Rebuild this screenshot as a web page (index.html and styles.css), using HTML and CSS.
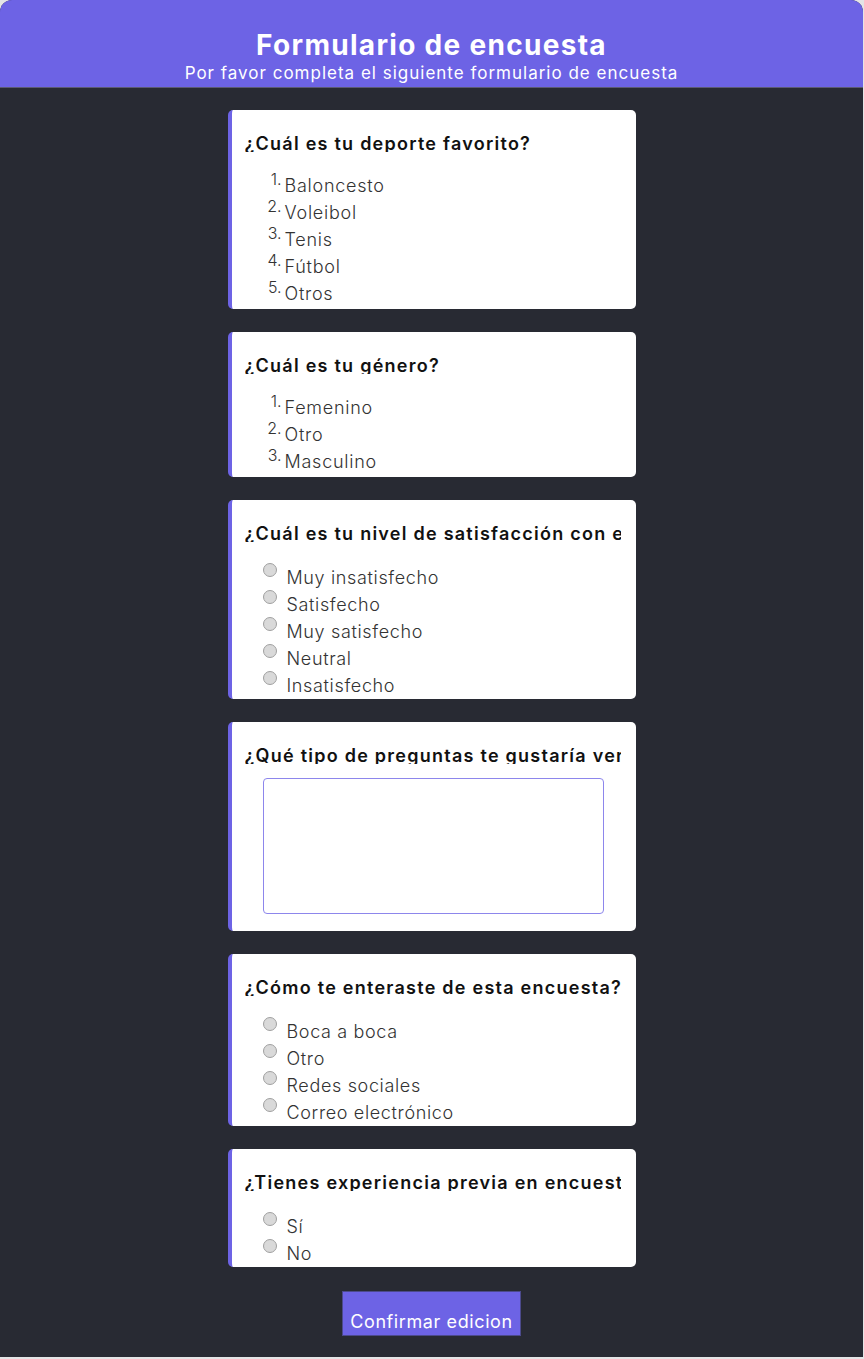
FILE: index.html
```html
<!DOCTYPE html>
<html lang="es">
<head>
<meta charset="utf-8">
<title>Formulario de encuesta</title>
<link rel="stylesheet" href="styles.css">
</head>
<body>
<div class="page">
  <header class="header">
    <h1 class="header-title">Formulario de encuesta</h1>
    <p class="header-sub">Por favor completa el siguiente formulario de encuesta</p>
  </header>
  <main class="main">
    <section class="card">
      <h2 class="q-title">¿Cuál es tu deporte favorito?</h2>
      <ol class="num-list">
        <li><span>Baloncesto</span></li>
        <li><span>Voleibol</span></li>
        <li><span>Tenis</span></li>
        <li><span>Fútbol</span></li>
        <li><span>Otros</span></li>
      </ol>
    </section>
    <section class="card">
      <h2 class="q-title">¿Cuál es tu género?</h2>
      <ol class="num-list">
        <li><span>Femenino</span></li>
        <li><span>Otro</span></li>
        <li><span>Masculino</span></li>
      </ol>
    </section>
    <section class="card">
      <h2 class="q-title">¿Cuál es tu nivel de satisfacción con el servicio?</h2>
      <ul class="radio-list">
        <li><span class="radio"></span><span>Muy insatisfecho</span></li>
        <li><span class="radio"></span><span>Satisfecho</span></li>
        <li><span class="radio"></span><span>Muy satisfecho</span></li>
        <li><span class="radio"></span><span>Neutral</span></li>
        <li><span class="radio"></span><span>Insatisfecho</span></li>
      </ul>
    </section>
    <section class="card">
      <h2 class="q-title">¿Qué tipo de preguntas te gustaría ver en futuras encuestas?</h2>
      <textarea class="answer"></textarea>
    </section>
    <section class="card">
      <h2 class="q-title">¿Cómo te enteraste de esta encuesta?</h2>
      <ul class="radio-list">
        <li><span class="radio"></span><span>Boca a boca</span></li>
        <li><span class="radio"></span><span>Otro</span></li>
        <li><span class="radio"></span><span>Redes sociales</span></li>
        <li><span class="radio"></span><span>Correo electrónico</span></li>
      </ul>
    </section>
    <section class="card">
      <h2 class="q-title">¿Tienes experiencia previa en encuestas?</h2>
      <ul class="radio-list">
        <li><span class="radio"></span><span>Sí</span></li>
        <li><span class="radio"></span><span>No</span></li>
      </ul>
    </section>
    <button class="confirm" type="button">Confirmar edicion</button>
  </main>
</div>
</body>
</html>
```

FILE: styles.css
```css
* { box-sizing: border-box; }

html, body {
  margin: 0;
  padding: 0;
}

body {
  background: #e4e4e6;
  font-family: Inter, "Noto Sans", "DejaVu Sans", sans-serif;
}

.page {
  width: 863px;
  height: 1357px;
  background: #282a33;
  border-radius: 12px 12px 0 0;
  overflow: hidden;
}

.header {
  background: #6d63e5;
  height: 88px;
  padding-top: 29px;
  border-bottom: 1px solid #5b5a73;
  text-align: center;
  color: #ffffff;
}

.header-title {
  margin: 0;
  font-size: 28px;
  line-height: 33px;
  font-weight: 700;
  letter-spacing: 1.3px;
}

.header-sub {
  margin: 0;
  font-size: 17px;
  line-height: 22px;
  font-weight: 400;
  letter-spacing: 1px;
}

.main {
  display: flex;
  flex-direction: column;
  align-items: center;
  padding-top: 22px;
  gap: 23px;
}

.card {
  width: 408px;
  background: #ffffff;
  border-radius: 5px;
  border-left: 4px solid #6d63e5;
  padding: 0 15px 0 13px;
}

.q-title {
  margin: 22px 0 0;
  height: 20px;
  overflow: hidden;
  white-space: nowrap;
  font-size: 18px;
  line-height: 24px;
  font-weight: 600;
  color: #111111;
  letter-spacing: 1.25px;
}

.num-list {
  list-style: none;
  counter-reset: item;
  margin: 20px 0 2px;
  padding: 0 0 0 17px;
}

.num-list li {
  counter-increment: item;
  display: flex;
  align-items: flex-start;
  height: 27px;
  font-size: 18px;
  line-height: 27px;
  font-weight: 300;
  color: #333333;
  letter-spacing: 0.75px;
}

.num-list li::before {
  content: counter(item) ".";
  width: 20px;
  margin-right: 3px;
  text-align: right;
  font-size: 16px;
  line-height: 14px;
  letter-spacing: 0;
}

.radio-list {
  list-style: none;
  margin: 22px 0 0;
  padding: 0 0 0 18px;
}

.radio-list li {
  display: flex;
  align-items: flex-start;
  height: 27px;
  font-size: 18px;
  line-height: 27px;
  font-weight: 300;
  color: #333333;
  letter-spacing: 0.65px;
}

.radio {
  width: 14px;
  height: 14px;
  margin-top: -1px;
  margin-right: 10px;
  border-radius: 50%;
  background: #d9d9d9;
  border: 1px solid #a0a0a0;
  flex: none;
}

.answer {
  display: block;
  width: 341px;
  height: 136px;
  margin: 14px 0 17px 18px;
  border: 1px solid #8d86ec;
  border-radius: 4px;
  resize: none;
  background: #ffffff;
  font-family: inherit;
}

.confirm {
  margin-top: 1px;
  width: 179px;
  height: 45px;
  padding: 17px 0 0;
  background: #6d63e5;
  border: 1px solid #4c4a8c;
  color: #ffffff;
  font-family: inherit;
  font-size: 18px;
  line-height: 24px;
  font-weight: 400;
  letter-spacing: 0.6px;
  text-align: center;
}
```
